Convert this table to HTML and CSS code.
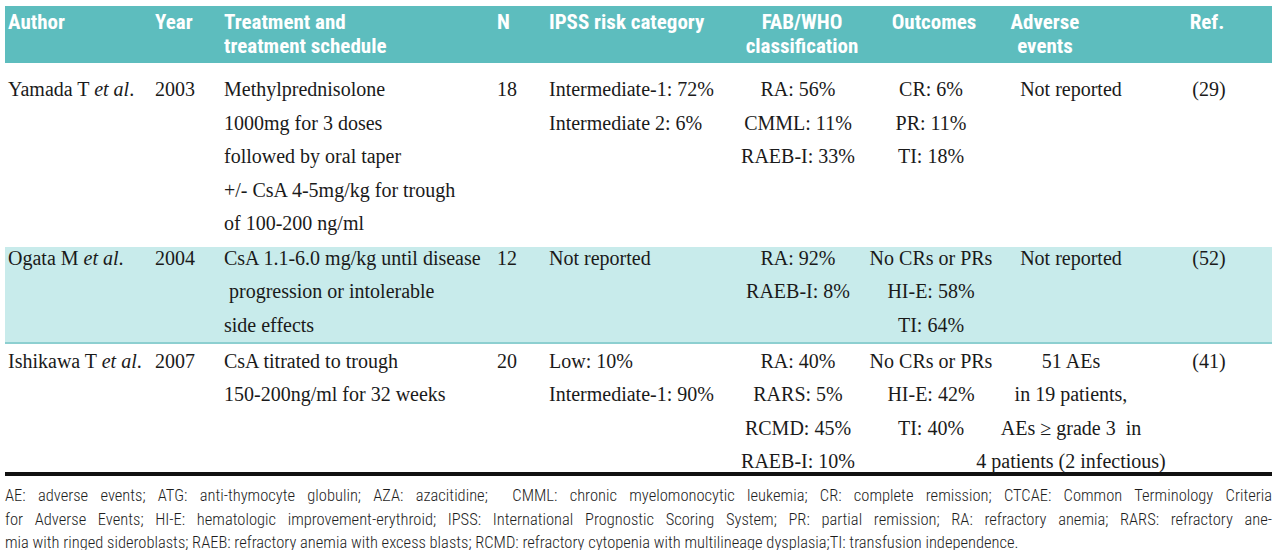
FILE: index.html
```html
<!DOCTYPE html>
<html lang="en">
<head>
<meta charset="utf-8">
<title>Table</title>
<link rel="stylesheet" href="styles.css">
</head>
<body>
<div class="page">
  <div class="row head">
    <div class="c c-author">Author</div>
    <div class="c c-year">Year</div>
    <div class="c c-treat">Treatment and<br>treatment schedule</div>
    <div class="c c-n">N</div>
    <div class="c c-ipss">IPSS risk category</div>
    <div class="c c-fab ctr"><span>FAB/WHO</span><span>classification</span></div>
    <div class="c c-out ctr"><span>Outcomes</span></div>
    <div class="c c-ae ctr"><span>Adverse</span><span>events</span></div>
    <div class="c c-ref ctr"><span>Ref.</span></div>
  </div>

  <div class="row body r1">
    <div class="c c-author">Yamada T <i>et al</i>.</div>
    <div class="c c-year">2003</div>
    <div class="c c-treat">Methylprednisolone<br>1000mg for 3 doses<br>followed by oral taper<br>+/- CsA 4-5mg/kg for trough<br>of 100-200 ng/ml</div>
    <div class="c c-n">18</div>
    <div class="c c-ipss">Intermediate-1: 72%<br>Intermediate 2: 6%</div>
    <div class="c c-fab ctr"><span>RA: 56%</span><span>CMML: 11%</span><span>RAEB-I: 33%</span></div>
    <div class="c c-out ctr"><span>CR: 6%</span><span>PR: 11%</span><span>TI: 18%</span></div>
    <div class="c c-ae ctr"><span>Not reported</span></div>
    <div class="c c-ref ctr"><span>(29)</span></div>
  </div>

  <div class="row body r2">
    <div class="c c-author">Ogata M <i>et al</i>.</div>
    <div class="c c-year">2004</div>
    <div class="c c-treat">CsA 1.1-6.0 mg/kg until disease<br>&nbsp;progression or intolerable<br>side effects</div>
    <div class="c c-n">12</div>
    <div class="c c-ipss">Not reported</div>
    <div class="c c-fab ctr"><span>RA: 92%</span><span>RAEB-I: 8%</span></div>
    <div class="c c-out ctr"><span>No CRs or PRs</span><span>HI-E: 58%</span><span>TI: 64%</span></div>
    <div class="c c-ae ctr"><span>Not reported</span></div>
    <div class="c c-ref ctr"><span>(52)</span></div>
  </div>

  <div class="row body r3">
    <div class="c c-author">Ishikawa T <i>et al</i>.</div>
    <div class="c c-year">2007</div>
    <div class="c c-treat">CsA titrated to trough<br>150-200ng/ml for 32 weeks</div>
    <div class="c c-n">20</div>
    <div class="c c-ipss">Low: 10%<br>Intermediate-1: 90%</div>
    <div class="c c-fab ctr"><span>RA: 40%</span><span>RARS: 5%</span><span>RCMD: 45%</span><span>RAEB-I: 10%</span></div>
    <div class="c c-out ctr"><span>No CRs or PRs</span><span>HI-E: 42%</span><span>TI: 40%</span></div>
    <div class="c c-ae ctr"><span>51 AEs</span><span>in 19 patients,</span><span>AEs &ge; grade 3&nbsp; in</span><span>4 patients (2 infectious)</span></div>
    <div class="c c-ref ctr"><span>(41)</span></div>
  </div>

  <div class="rule"></div>

  <div class="notes">
    <div class="fn just">AE: adverse events; ATG: anti-thymocyte globulin; AZA: azacitidine;&nbsp; CMML: chronic myelomonocytic leukemia; CR: complete remission; CTCAE: Common Terminology Criteria</div>
    <div class="fn just">for Adverse Events; HI-E: hematologic improvement-erythroid; IPSS: International Prognostic Scoring System; PR: partial remission; RA: refractory anemia; RARS: refractory ane-</div>
    <div class="fn">mia with ringed sideroblasts; RAEB: refractory anemia with excess blasts; RCMD: refractory cytopenia with multilineage dysplasia;TI: transfusion independence.</div>
  </div>
</div>
</body>
</html>
```

FILE: styles.css
```css
html, body {
  margin: 0;
  padding: 0;
  background: #ffffff;
}

.page {
  width: 1267px;
  padding: 6px 0 0 5px;
}

.row {
  display: grid;
  grid-template-columns: 145px 69px 271px 55px 185px 136px 130px 150px 126px;
}

.head {
  background: #5dbdbe;
  color: #ffffff;
  font-family: "Roboto Condensed", "Roboto", sans-serif;
  font-weight: 700;
  font-size: 21px;
  line-height: 24px;
  padding: 4px 0 5px;
}

.body {
  font-family: "Liberation Serif", serif;
  font-size: 20px;
  line-height: 33.5px;
  color: #1a1a1a;
}

.r1 {
  padding: 10px 0 6px;
}

.r2 {
  background: #c8ebeb;
  border-bottom: 2px solid #8dcfd0;
}

.r2 .c {
  margin-top: -5px;
}

.r3 {
  height: 128px;
}

.r3 .c {
  margin-top: 0.5px;
}

.c {
  white-space: nowrap;
}

.ctr {
  display: flex;
  flex-direction: column;
  align-items: center;
}

.c-author { padding-left: 3px; }
.c-year { padding-left: 5px; }
.c-treat { padding-left: 5px; }
.c-n { padding-left: 7px; }
.c-ipss { padding-left: 4px; }

.head .c-fab { padding-left: 8px; }
.head .c-out { padding-left: 6px; }
.head .c-ae { padding-right: 52px; }
.head .c-ref { padding-right: 4px; }

.rule {
  height: 4px;
  background: #111111;
}

.notes {
  padding-top: 8px;
  font-family: "Roboto Condensed", "Roboto", sans-serif;
  font-weight: 300;
  font-size: 16.5px;
  line-height: 23.5px;
  color: #1e1e1e;
}

.fn {
  white-space: nowrap;
}

.just {
  white-space: normal;
  text-align: justify;
  text-align-last: justify;
}
```
